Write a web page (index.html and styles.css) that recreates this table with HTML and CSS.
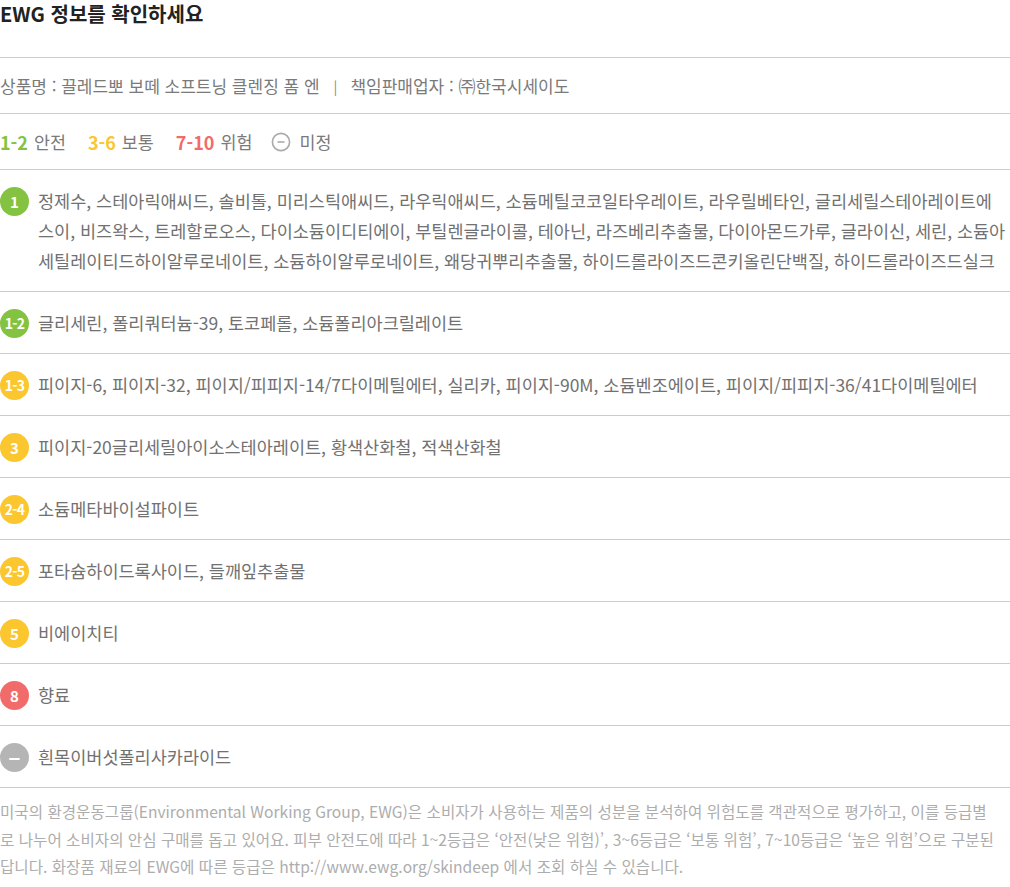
FILE: index.html
```html
<!DOCTYPE html>
<html lang="ko">
<head>
  <meta charset="UTF-8" />
  <meta name="viewport" content="width=device-width, initial-scale=1.0" />
  <title>EWG 정보</title>
  <link rel="stylesheet" href="styles.css">
</head>
<body>
  <div class="ewg">
    <h2 class="title">EWG 정보를 확인하세요</h2>

    <div class="row product">
      <span>상품명 : 끌레드뽀 보떼 소프트닝 클렌징 폼 엔</span>
      <span class="sep">|</span>
      <span>책임판매업자 : ㈜한국시세이도</span>
    </div>

    <!-- 등급 범례 -->
    <div class="row legend">
      <span class="grp"><b class="green">1-2</b>안전</span>
      <span class="grp"><b class="yellow">3-6</b>보통</span>
      <span class="grp"><b class="red">7-10</b>위험</span>
      <span class="grp">
        <svg class="unknown" width="20" height="20" viewBox="0 0 20 20">
          <circle cx="10" cy="10" r="8.6" fill="none" stroke="#aaa" stroke-width="1.6" />
          <line x1="6.5" y1="10" x2="13.5" y2="10" stroke="#aaa" stroke-width="1.6" />
        </svg>미정
      </span>
    </div>

    <!-- 성분 목록 -->
    <ul class="list">
      <li><span class="badge green">1</span><p>정제수, 스테아릭애씨드, 솔비톨, 미리스틱애씨드, 라우릭애씨드, 소듐메틸코코일타우레이트, 라우릴베타인, 글리세릴스테아레이트에<br>스이, 비즈왁스, 트레할로오스, 다이소듐이디티에이, 부틸렌글라이콜, 테아닌, 라즈베리추출물, 다이아몬드가루, 글라이신, 세린, 소듐아세틸레이티드하이알루로네이트, 소듐하이알루로네이트, 왜당귀뿌리추출물, 하이드롤라이즈드콘키올린단백질, 하이드롤라이즈드실크</p></li>
      <li><span class="badge green small">1-2</span><p>글리세린, 폴리쿼터늄-39, 토코페롤, 소듐폴리아크릴레이트</p></li>
      <li><span class="badge yellow small">1-3</span><p>피이지-6, 피이지-32, 피이지/피피지-14/7다이메틸에터, 실리카, 피이지-90M, 소듐벤조에이트, 피이지/피피지-36/41다이메틸에터</p></li>
      <li><span class="badge yellow">3</span><p>피이지-20글리세릴아이소스테아레이트, 황색산화철, 적색산화철</p></li>
      <li><span class="badge yellow small">2-4</span><p>소듐메타바이설파이트</p></li>
      <li><span class="badge yellow small">2-5</span><p>포타슘하이드록사이드, 들깨잎추출물</p></li>
      <li><span class="badge yellow">5</span><p>비에이치티</p></li>
      <li><span class="badge red">8</span><p>향료</p></li>
      <li><span class="badge grey">&minus;</span><p>흰목이버섯폴리사카라이드</p></li>
    </ul>

    <p class="note">미국의 환경운동그룹(Environmental Working Group, EWG)은 소비자가 사용하는 제품의 성분을 분석하여 위험도를 객관적으로 평가하고, 이를 등급별<br>로 나누어 소비자의 안심 구매를 돕고 있어요. 피부 안전도에 따라 1~2등급은 ‘안전(낮은 위험)’, 3~6등급은 ‘보통 위험’, 7~10등급은 ‘높은 위험’으로 구분된<br>답니다. 화장품 재료의 EWG에 따른 등급은 http://www.ewg.org/skindeep 에서 조회 하실 수 있습니다.</p>
  </div>
</body>
</html>
```

FILE: styles.css
```css
* {
  box-sizing: border-box;
}

body {
  margin: 0;
  padding: 0;
  background: #fff;
  font-family: "Noto Sans CJK KR", "Noto Sans", sans-serif;
  color: #666;
}

.ewg {
  width: 1010px;
}

.title {
  margin: 0;
  height: 58px;
  font-size: 20px;
  line-height: 28px;
  font-weight: 700;
  color: #222;
  border-bottom: 1px solid #ccc;
}

.row {
  height: 56px;
  display: flex;
  align-items: center;
  border-bottom: 1px solid #ccc;
  font-size: 17px;
  color: #7a7a7a;
}

.product .sep {
  margin: 0 13px 0 14px;
  font-size: 14px;
  color: #888;
}

.legend {
  font-size: 17.4px;
}

.legend .grp {
  display: flex;
  align-items: center;
  margin-right: 22px;
}

.legend b {
  font-weight: 700;
  margin-right: 6px;
  font-size: 18px;
}

.legend .unknown {
  margin: 0 8px 0 -3px;
}

b.green { color: #84c341; }
b.yellow { color: #fbc62e; }
b.red { color: #f26b6b; }

.list {
  list-style: none;
  margin: 0;
  padding: 0;
}

.list li {
  display: flex;
  align-items: flex-start;
  padding: 16px 0 15px;
  border-bottom: 1px solid #ccc;
}

.list p {
  margin: 0;
  font-size: 17.5px;
  line-height: 30px;
  color: #717171;
}

.badge {
  flex: none;
  width: 29px;
  height: 29px;
  border-radius: 50%;
  margin: 1px 9px 0 0;
  color: #fff;
  font-size: 15px;
  font-weight: 700;
  text-align: center;
  line-height: 29px;
}

.badge.small {
  font-size: 14px;
  letter-spacing: -0.8px;
}

.badge.green { background: #84c341; }
.badge.yellow { background: #fbc62e; }
.badge.red { background: #f26b6b; }
.badge.grey { background: #b5b5b5; font-size: 20px; }

.note {
  margin: 0;
  padding: 10px 0 0;
  font-size: 15.6px;
  line-height: 27.5px;
  color: #adadad;
}
```
